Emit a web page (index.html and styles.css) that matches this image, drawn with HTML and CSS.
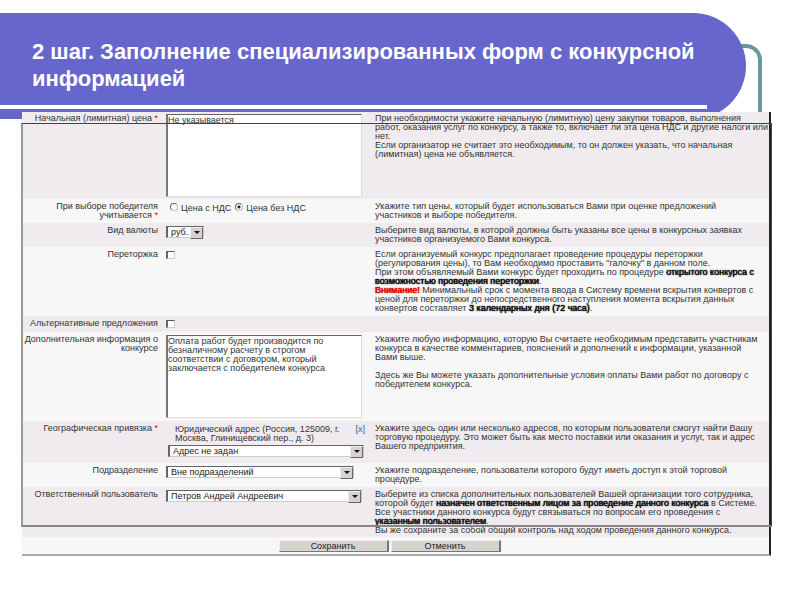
FILE: index.html
```html
<!DOCTYPE html>
<html lang="ru">
  <head>
    <meta charset="UTF-8" />
    <meta name="viewport" content="width=device-width, initial-scale=1.0" />
    <title>2 шаг. Заполнение специализированных форм</title>
    <link rel="stylesheet" href="styles.css">
  </head>
  <body>
    <header class="header">
      <div class="banner">
        <h1 class="title">2 шаг. Заполнение специализированных форм с конкурсной информацией</h1>
        <div class="rule"></div>
      </div>
    </header>
    <form class="form">
      <div class="row first">
        <label class="label" for="price">Начальная (лимитная) цена <span class="req">*</span></label>
        <div class="field"><textarea class="area" id="price">Не указывается</textarea></div>
        <p class="help">При необходимости укажите начальную (лимитную) цену закупки товаров, выполнения<br>работ, оказания услуг по конкурсу, а также то, включает ли эта цена НДС и другие налоги или<br>нет.<br>Если организатор не считает это необходимым, то он должен указать, что начальная<br>(лимитная) цена не объявляется.</p>
      </div>
      <div class="row">
        <div class="label" id="winner">При выборе победителя<br>учитывается <span class="req">*</span></div>
        <div class="field radios" role="radiogroup" aria-labelledby="winner">
          <label class="option"><input class="radio" type="radio" name="vat"> Цена с НДС</label>
          <label class="option"><input class="radio" type="radio" name="vat" checked> Цена без НДС</label>
        </div>
        <p class="help">Укажите тип цены, который будет использоваться Вами при оценке предложений<br>участников и выборе победителя.</p>
      </div>
      <div class="row">
        <label class="label" for="currency">Вид валюты</label>
        <div class="field">
          <div class="select small"><select id="currency"><option>руб.</option></select></div>
        </div>
        <p class="help">Выберите вид валюты, в которой должны быть указаны все цены в конкурсных заявках<br>участников организуемого Вами конкурса.</p>
      </div>
      <div class="row">
        <label class="label" for="rebid">Переторжка</label>
        <div class="field"><input class="check" type="checkbox" id="rebid"></div>
        <p class="help">Если организуемый конкурс предполагает проведение процедуры переторжки<br>(регулирования цены), то Вам необходимо проставить "галочку" в данном поле.<br>При этом объявляемый Вами конкурс будет проходить по процедуре <b>открытого конкурса с<br>возможностью проведения переторжки</b>.<br><b class="warn">Внимание!</b> Минимальный срок с момента ввода в Систему времени вскрытия конвертов с<br>ценой для переторжки до непосредственного наступления момента вскрытия данных<br>конвертов составляет <b>3 календарных дня (72 часа)</b>.</p>
      </div>
      <div class="row">
        <label class="label" for="alt">Альтернативные предложения</label>
        <div class="field"><input class="check" type="checkbox" id="alt"></div>
      </div>
      <div class="row">
        <label class="label" for="info">Дополнительная информация о<br>конкурсе</label>
        <div class="field"><textarea class="area" id="info">Оплата работ будет производится по
безналичному расчету в строгом
соответствии с договором, который
заключается с победителем конкурса</textarea></div>
        <p class="help">Укажите любую информацию, которую Вы считаете необходимым представить участникам<br>конкурса в качестве комментариев, пояснений и дополнений к информации, указанной<br>Вами выше.<br><br>Здесь же Вы можете указать дополнительные условия оплаты Вами работ по договору с<br>победителем конкурса.</p>
      </div>
      <div class="row">
        <label class="label" for="address">Географическая привязка <span class="req">*</span></label>
        <div class="field">
          <div class="address">
            <span>Юридический адрес (Россия, 125009, г.<br>Москва, Глинищевский пер., д. 3)</span>
            <a class="remove" href="#">[x]</a>
          </div>
          <div class="select shifted"><select id="address"><option>Адрес не задан</option></select></div>
        </div>
        <p class="help">Укажите здесь один или несколько адресов, по которым пользователи смогут найти Вашу<br>торговую процедуру. Это может быть как место поставки или оказания и услуг, так и адрес<br>Вашего предприятия.</p>
      </div>
      <div class="row">
        <label class="label" for="unit">Подразделение</label>
        <div class="field">
          <div class="select medium"><select id="unit"><option>Вне подразделений</option></select></div>
        </div>
        <p class="help">Укажите подразделение, пользователи которого будут иметь доступ к этой торговой<br>процедуре.</p>
      </div>
      <div class="row last">
        <label class="label" for="user">Ответственный пользователь</label>
        <div class="field">
          <div class="select"><select id="user"><option>Петров Андрей Андреевич</option></select></div>
        </div>
        <p class="help">Выберите из списка дополнительных пользователей Вашей организации того сотрудника,<br>которой будет <b>назначен ответственным лицом за проведение данного конкурса</b> в Системе.<br>Все участники данного конкурса будут связываться по вопросам его проведения с<br><b>указанным пользователем</b>.<br>Вы же сохраните за собой общий контроль над ходом проведения данного конкурса.</p>
      </div>
      <div class="buttons">
        <button class="button" type="submit">Сохранить</button>
        <button class="button" type="button">Отменить</button>
      </div>
      <div class="frame"></div>
    </form>
  </body>
</html>
```
FILE: styles.css
```css
* {
  box-sizing: border-box;
}
body {
  margin: 0;
  padding-top: 13px;
  background: #fff;
  color: #333;
  font-family: "Liberation Sans", Arial, sans-serif;
}
.header {
  position: relative;
  padding-right: 54px;
}
/* зелёная скоба за правым краем шапки */
.header::before {
  content: "";
  position: absolute;
  top: 31px;
  right: 38px;
  width: 60px;
  height: 75px;
  border: 4px solid #669999;
  border-width: 4px 4px 0 0;
  border-top-right-radius: 16px;
}
.banner {
  position: relative;
  height: 106px;
  padding-top: 25px;
  background: #6666cc;
  border-radius: 0 53px 53px 0;
  display: flex;
  flex-direction: column;
  justify-content: space-between;
}
.title {
  margin: 0;
  padding: 0 32px;
  color: #fff;
  font-size: 22px;
  line-height: 27px;
}
.rule {
  height: 4px;
  margin: 0 39px 10px 0;
  background: #fff;
}
.form {
  position: relative;
  margin: -7px 29px 0 22px;
  border-right: 2px solid #222;
  border-bottom: 2px solid #aaa;
  background: #f7f7f7;
  font-size: 9px;
  line-height: 9px;
}
.row {
  display: grid;
  grid-template-columns: 136px 196px 1fr;
  padding: 3px 0;
  min-height: 16px;
}
.row:nth-child(odd) {
  background: #efebef;
}
.first {
  padding: 2px 0;
}
.last {
  padding-bottom: 2px;
}
.label {
  text-align: right;
  white-space: nowrap;
}
.req {
  color: #d00;
}
.field {
  margin: 0 -8px 0 8px;
}
.help {
  margin: 0 0 0 21px;
  white-space: nowrap;
}
.help b {
  color: #111;
  font-weight: normal;
  text-shadow: 0 0 1px currentColor, 0 0 1px currentColor;
}
.help .warn {
  color: #d00;
}
.area {
  display: block;
  width: 100%;
  height: 83px;
  padding: 1px 0;
  border: 1px solid #ddd;
  border-top-color: #666;
  border-left: 2px solid #777;
  background: #fff;
  color: #333;
  font: inherit;
  resize: none;
  overflow: hidden;
  outline: none;
}
.radios {
  display: flex;
}
.option {
  display: flex;
  align-items: center;
  gap: 3px;
  height: 12px;
  white-space: nowrap;
}
.radio {
  appearance: none;
  width: 8px;
  height: 8px;
  margin: 0 0 3px 4px;
  border: 1px solid #bbb;
  border-top-color: #666;
  border-left-color: #666;
  border-radius: 50%;
  background: #fff;
}
.radio:checked {
  background: radial-gradient(circle, #222 1px, #fff 2px);
}
.check {
  appearance: none;
  display: block;
  width: 9px;
  height: 8px;
  margin: 1px 0 0;
  border: 1px solid #ccc;
  border-top-color: #555;
  border-left: 2px solid #666;
  background: #fff;
}
.select {
  position: relative;
  height: 12px;
}
.select select {
  appearance: none;
  display: block;
  width: 100%;
  height: 12px;
  padding: 0 14px 0 3px;
  border: 1px solid #ccc;
  border-top-color: #666;
  border-left: 2px solid #666;
  border-radius: 0;
  background: #fff;
  color: #222;
  font: inherit;
}
.select::before {
  content: "";
  position: absolute;
  top: 1px;
  right: 1px;
  width: 11px;
  height: 10px;
  border: 1px solid #eee;
  border-right-color: #666;
  border-bottom-color: #666;
  background: #d6d3ce;
  pointer-events: none;
}
.select::after {
  content: "";
  position: absolute;
  top: 5px;
  right: 4px;
  border: 3px solid transparent;
  border-top-color: #111;
  border-bottom: 0;
  pointer-events: none;
}
.small {
  width: 38px;
}
.medium {
  width: 188px;
}
.shifted {
  margin: 2px -2px 3px 2px;
}
.address {
  display: flex;
  justify-content: space-between;
  padding: 1px 0 0 9px;
  margin-right: -3px;
}
.remove {
  color: #36a;
  text-decoration: none;
}
.buttons {
  display: flex;
  justify-content: center;
  gap: 2px;
  padding: 3px 12px 2px 0;
}
.button {
  width: 110px;
  height: 12px;
  padding: 0;
  border: 1px solid #eee;
  border-right: 2px solid #777;
  border-bottom-color: #777;
  background: #d6d3ce;
  color: #222;
  font: inherit;
}
/* рамка поверх формы */
.frame {
  position: absolute;
  top: 11px;
  right: -3px;
  bottom: 27px;
  left: -1px;
  border: 1px solid #444;
  border-left: 2px solid #999;
  border-bottom: 2px solid #888;
  pointer-events: none;
}
```
